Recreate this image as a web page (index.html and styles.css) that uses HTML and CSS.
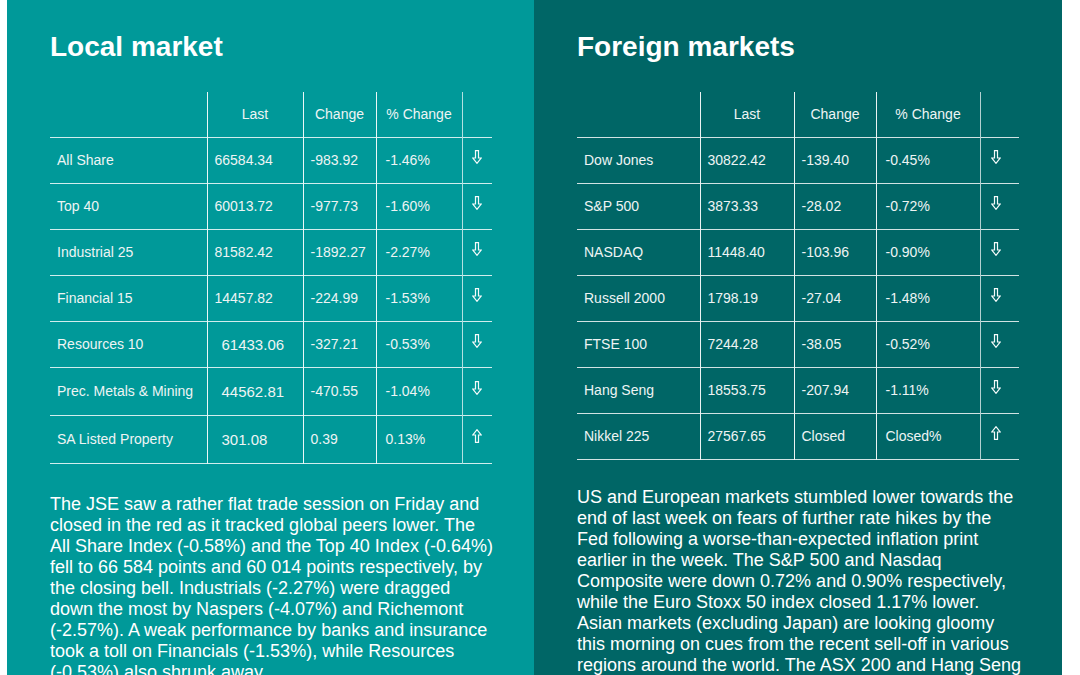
FILE: index.html
```html
<!DOCTYPE html>
<html lang="en">
<head>
<meta charset="utf-8">
<title>Markets</title>
<link rel="stylesheet" href="styles.css">
</head>
<body>
<div class="wrap">
  <section class="panel panel-local">
    <h2 class="title">Local market</h2>
    <table class="mkt mkt-local">
      <colgroup>
        <col class="c-name"><col class="c-last"><col class="c-chg"><col class="c-pct"><col class="c-dir">
      </colgroup>
      <thead>
        <tr class="head"><th></th><th>Last</th><th>Change</th><th>% Change</th><th></th></tr>
      </thead>
      <tbody>
        <tr><td>All Share</td><td>66584.34</td><td>-983.92</td><td>-1.46%</td><td class="dir"><svg class="arr" viewBox="0 0 10 14" width="10" height="14"><path d="M3.5 0.6 H6.5 V8 H9.3 L5 13.3 L0.7 8 H3.5 Z"/></svg></td></tr>
        <tr><td>Top 40</td><td>60013.72</td><td>-977.73</td><td>-1.60%</td><td class="dir"><svg class="arr" viewBox="0 0 10 14" width="10" height="14"><path d="M3.5 0.6 H6.5 V8 H9.3 L5 13.3 L0.7 8 H3.5 Z"/></svg></td></tr>
        <tr><td>Industrial 25</td><td>81582.42</td><td>-1892.27</td><td>-2.27%</td><td class="dir"><svg class="arr" viewBox="0 0 10 14" width="10" height="14"><path d="M3.5 0.6 H6.5 V8 H9.3 L5 13.3 L0.7 8 H3.5 Z"/></svg></td></tr>
        <tr><td>Financial 15</td><td>14457.82</td><td>-224.99</td><td>-1.53%</td><td class="dir"><svg class="arr" viewBox="0 0 10 14" width="10" height="14"><path d="M3.5 0.6 H6.5 V8 H9.3 L5 13.3 L0.7 8 H3.5 Z"/></svg></td></tr>
        <tr><td>Resources 10</td><td class="big">61433.06</td><td>-327.21</td><td>-0.53%</td><td class="dir"><svg class="arr" viewBox="0 0 10 14" width="10" height="14"><path d="M3.5 0.6 H6.5 V8 H9.3 L5 13.3 L0.7 8 H3.5 Z"/></svg></td></tr>
        <tr class="tall"><td>Prec. Metals &amp; Mining</td><td class="big">44562.81</td><td>-470.55</td><td>-1.04%</td><td class="dir"><svg class="arr" viewBox="0 0 10 14" width="10" height="14"><path d="M3.5 0.6 H6.5 V8 H9.3 L5 13.3 L0.7 8 H3.5 Z"/></svg></td></tr>
        <tr class="tall"><td>SA Listed Property</td><td class="big">301.08</td><td>0.39</td><td>0.13%</td><td class="dir"><svg class="arr" viewBox="0 0 10 14" width="10" height="14"><path d="M3.5 13.4 H6.5 V6 H9.3 L5 0.7 L0.7 6 H3.5 Z"/></svg></td></tr>
      </tbody>
    </table>
    <p class="copy copy-local">The JSE saw a rather flat trade session on Friday and closed in the red as it tracked global peers lower. The All Share Index (-0.58%) and the Top 40 Index (-0.64%) fell to 66 584 points and 60 014 points respectively, by the closing bell. Industrials (-2.27%) were dragged down the most by Naspers (-4.07%) and Richemont (-2.57%). A weak performance by banks and insurance took a toll on Financials (-1.53%), while Resources (-0.53%) also shrunk away.</p>
  </section>
  <section class="panel panel-foreign">
    <h2 class="title">Foreign markets</h2>
    <table class="mkt mkt-foreign">
      <colgroup>
        <col class="c-name"><col class="c-last"><col class="c-chg"><col class="c-pct"><col class="c-dir">
      </colgroup>
      <thead>
        <tr class="head"><th></th><th>Last</th><th>Change</th><th>% Change</th><th></th></tr>
      </thead>
      <tbody>
        <tr><td>Dow Jones</td><td>30822.42</td><td>-139.40</td><td>-0.45%</td><td class="dir"><svg class="arr" viewBox="0 0 10 14" width="10" height="14"><path d="M3.5 0.6 H6.5 V8 H9.3 L5 13.3 L0.7 8 H3.5 Z"/></svg></td></tr>
        <tr><td>S&amp;P 500</td><td>3873.33</td><td>-28.02</td><td>-0.72%</td><td class="dir"><svg class="arr" viewBox="0 0 10 14" width="10" height="14"><path d="M3.5 0.6 H6.5 V8 H9.3 L5 13.3 L0.7 8 H3.5 Z"/></svg></td></tr>
        <tr><td>NASDAQ</td><td>11448.40</td><td>-103.96</td><td>-0.90%</td><td class="dir"><svg class="arr" viewBox="0 0 10 14" width="10" height="14"><path d="M3.5 0.6 H6.5 V8 H9.3 L5 13.3 L0.7 8 H3.5 Z"/></svg></td></tr>
        <tr><td>Russell 2000</td><td>1798.19</td><td>-27.04</td><td>-1.48%</td><td class="dir"><svg class="arr" viewBox="0 0 10 14" width="10" height="14"><path d="M3.5 0.6 H6.5 V8 H9.3 L5 13.3 L0.7 8 H3.5 Z"/></svg></td></tr>
        <tr><td>FTSE 100</td><td>7244.28</td><td>-38.05</td><td>-0.52%</td><td class="dir"><svg class="arr" viewBox="0 0 10 14" width="10" height="14"><path d="M3.5 0.6 H6.5 V8 H9.3 L5 13.3 L0.7 8 H3.5 Z"/></svg></td></tr>
        <tr><td>Hang Seng</td><td>18553.75</td><td>-207.94</td><td>-1.11%</td><td class="dir"><svg class="arr" viewBox="0 0 10 14" width="10" height="14"><path d="M3.5 0.6 H6.5 V8 H9.3 L5 13.3 L0.7 8 H3.5 Z"/></svg></td></tr>
        <tr><td>Nikkel 225</td><td>27567.65</td><td>Closed</td><td>Closed%</td><td class="dir"><svg class="arr" viewBox="0 0 10 14" width="10" height="14"><path d="M3.5 13.4 H6.5 V6 H9.3 L5 0.7 L0.7 6 H3.5 Z"/></svg></td></tr>
      </tbody>
    </table>
    <p class="copy">US and European markets stumbled lower towards the end of last week on fears of further rate hikes by the Fed following a worse-than-expected inflation print earlier in the week. The S&amp;P 500 and Nasdaq Composite were down 0.72% and 0.90% respectively, while the Euro Stoxx 50 index closed 1.17% lower. Asian markets (excluding Japan) are looking gloomy this morning on cues from the recent sell-off in various regions around the world. The ASX 200 and Hang Seng are trading lower.</p>
  </section>
</div>
</body>
</html>
```

FILE: styles.css
```css
* { box-sizing: border-box; }
html, body { margin: 0; padding: 0; background: #ffffff; }
body {
  font-family: "Liberation Sans", Arial, sans-serif;
  color: #ffffff;
  overflow: hidden;
}
.wrap {
  display: flex;
  padding-left: 7px;
  height: 675px;
}
.panel {
  padding: 31px 43px 0 43px;
}
.panel-local { width: 527px; background: #009999; }
.panel-foreign { width: 528px; background: #006666; }
.title {
  margin: 0;
  font-size: 28px;
  font-weight: bold;
  line-height: 32px;
  color: #ffffff;
}
.mkt {
  margin-top: 29px;
  width: 442px;
  border-collapse: collapse;
  table-layout: fixed;
  font-size: 14px;
  color: #eef4f4;
}
.mkt-local .c-name { width: 157px; }
.mkt-local .c-last { width: 96px; }
.mkt-local .c-chg { width: 73px; }
.mkt-local .c-pct { width: 86px; }
.mkt-local .c-dir { width: 30px; }
.mkt-foreign .c-name { width: 123px; }
.mkt-foreign .c-last { width: 94px; }
.mkt-foreign .c-chg { width: 82px; }
.mkt-foreign .c-pct { width: 104px; }
.mkt-foreign .c-dir { width: 39px; }
.mkt th, .mkt td {
  padding: 0 0 0 7px;
  border-left: 1px solid rgba(255,255,255,0.92);
  text-align: left;
  font-weight: normal;
  white-space: nowrap;
}
.mkt th { text-align: center; padding: 0; }
.mkt th:first-child, .mkt td:first-child { border-left: none; padding-left: 7px; }
.mkt th:last-child, .mkt td:last-child { border-left-color: rgba(255,255,255,0.7); }
.mkt td:nth-child(4) { padding-left: 9px; }
.mkt tr { border-bottom: 1px solid rgba(255,255,255,0.82); height: 46px; }
.mkt tr.head { height: 45px; }
.mkt tr.tall { height: 48px; }
.mkt td.big { font-size: 15px; padding-left: 14px; }
.mkt td.dir {
  padding-left: 9px;
  padding-bottom: 6px;
  line-height: 0;
}
.mkt-foreign td.dir { padding-left: 10px; }
.arr {
  display: inline-block;
  fill: none;
  stroke: #f4fafa;
  stroke-width: 1.2;
  stroke-linejoin: miter;
}
.copy {
  margin: 27px 0 0 0;
  font-size: 18px;
  line-height: 21px;
  color: #ffffff;
  width: 445px;
}
.copy-local { margin-top: 30px; }
```
